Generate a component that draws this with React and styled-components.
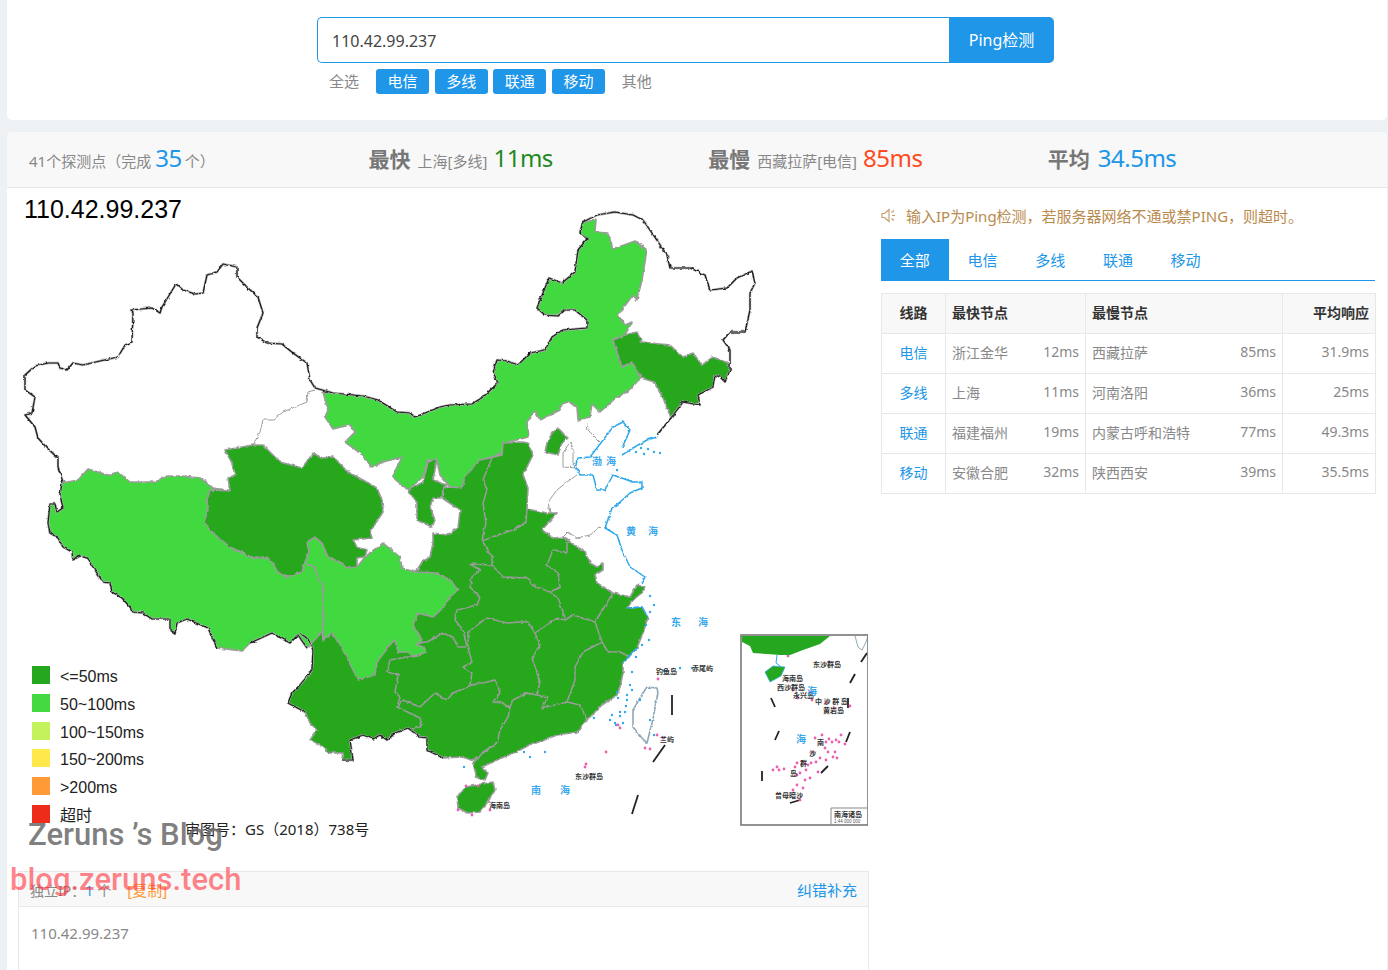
import React from "react";
import styled, { createGlobalStyle } from "styled-components";

const BLUE = "#2096e8";
const LINE = "#e8e8e8";
const FONT = `"Noto Sans", "Noto Sans CJK SC", sans-serif`;

const routes = ["电信", "多线", "联通", "移动"];

const rows = [
  { route: "电信", fast: "浙江金华", fastMs: "12ms", slow: "西藏拉萨", slowMs: "85ms", avg: "31.9ms" },
  { route: "多线", fast: "上海", fastMs: "11ms", slow: "河南洛阳", slowMs: "36ms", avg: "25ms" },
  { route: "联通", fast: "福建福州", fastMs: "19ms", slow: "内蒙古呼和浩特", slowMs: "77ms", avg: "49.3ms" },
  { route: "移动", fast: "安徽合肥", fastMs: "32ms", slow: "陕西西安", slowMs: "39ms", avg: "35.5ms" },
];

const legend = [
  { color: "#25a71f", label: "<=50ms" },
  { color: "#43d940", label: "50~100ms" },
  { color: "#c3f25c", label: "100~150ms" },
  { color: "#ffe94a", label: "150~200ms" },
  { color: "#ff9a36", label: ">200ms" },
  { color: "#ee2c1a", label: "超时" },
];

// map shapes, coordinates are page pixels (viewBox starts at the map corner)
const innerMongolia =
  "323,392 333,393 363,396 378,400 397,412 410,413 415,417 440,407 450,405 472,404 483,397 498,383 493,372 497,360 507,361 518,365 530,353 545,350 552,337 563,330 587,328 587,320 575,310 565,310 558,316 545,315 537,308 549,278 562,283 575,272 578,250 587,239 580,232 583,222 596,220 595,232 608,233 613,249 635,241 647,250 642,280 637,300 633,295 618,315 625,325 632,322 625,335 613,340 622,367 632,362 641,378 627,392 617,397 600,412 592,404 590,417 578,420 577,407 568,402 562,404 560,410 540,420 535,411 527,422 529,437 503,443 503,453 492,457 480,460 465,480 462,488 450,487 440,475 437,460 428,460 423,477 408,490 392,477 402,457 383,462 372,467 360,453 345,442 355,432 350,425 333,429 325,417 328,410";
const tibetSichuan =
  "62,483 78,480 88,469 108,475 118,472 130,482 155,482 167,476 183,476 200,478 213,488 228,490 300,530 315,537 340,562 357,567 365,557 383,543 400,557 402,568 415,572 437,573 450,580 458,590 450,597 443,608 433,617 418,613 413,625 422,640 417,645 423,647 426,653 413,656 408,652 398,652 395,640 390,645 377,662 375,675 358,680 342,648 332,633 323,640 322,632 307,648 298,635 290,643 272,633 250,643 242,651 217,648 208,628 187,619 177,623 175,633 170,630 170,619 152,619 143,613 133,612 130,607 122,598 112,592 110,583 103,582 87,558 80,556 73,560 72,552 63,547 58,538 50,533 48,523 50,504 55,504 57,512 63,508 60,495";
const qinghai =
  "225,450 253,445 263,445 280,462 302,468 313,453 322,458 333,457 348,472 363,480 377,488 382,500 383,512 370,532 372,538 353,540 357,547 367,550 365,557 357,558 357,567 347,568 340,562 328,557 322,543 315,537 307,542 309,552 305,562 302,572 293,575 287,577 278,573 273,563 267,558 253,558 230,547 213,533 204,522 208,510 207,500 210,490 230,491 228,478 235,475 232,463";
const jilin =
  "613,340 625,335 637,332 642,342 660,344 670,345 683,357 693,353 702,365 713,357 728,363 730,370 725,382 720,377 715,375 713,387 698,395 700,405 683,402 671,418 663,398 654,382 641,378 632,362 622,367";
const ningxia =
  "408,490 423,482 428,462 437,459 433,480 447,485 443,488 442,498 433,498 430,507 435,520 432,527 417,520 417,503";
const beijing = "558,428 568,438 562,443 558,455 545,452 547,443 552,433";
const south =
  "417,570 422,562 430,557 433,543 433,533 447,535 458,528 460,510 442,498 443,488 450,487 462,488 465,477 480,460 490,458 502,455 503,443 522,442 528,443 533,455 523,475 528,488 527,509 547,513 557,513 542,530 553,538 563,537 570,542 585,552 590,563 597,567 603,563 603,570 595,575 597,583 613,593 630,597 637,585 645,587 643,592 633,600 627,608 642,607 648,618 643,633 637,648 623,663 623,673 620,687 617,695 602,705 585,722 577,732 557,735 537,743 533,743 520,750 497,760 482,767 488,773 485,780 477,778 473,763 477,757 472,760 462,757 443,758 427,750 427,738 420,737 408,728 395,733 387,740 380,735 373,739 363,735 350,740 353,760 343,760 342,753 330,753 323,747 310,740 317,730 310,723 305,712 288,703 292,693 300,685 312,670 313,650 308,639 300,633 322,625";
const hainan = "457,797 465,787 493,782 495,790 487,803 480,812 468,813 458,808";
const taiwan = "647,687 657,688 658,693 652,723 647,743 642,738 633,727 633,710 643,693";

const provinceLines = [
  "492,458 483,480 487,490 483,503 486,523 482,540",
  "527,509 526,522 513,530 498,535 482,541",
  "483,542 492,557 492,565 503,577 528,578 532,585 550,592 558,598 565,618",
  "567,542 567,552 553,550 547,565 558,573 560,587 550,592",
  "492,565 470,564 480,570 472,577 470,587 480,597 477,605 457,610 455,620 463,630 467,647",
  "468,632 487,618 507,623 520,622 528,622 535,633 557,618 565,620 573,615 595,622 613,593",
  "535,633 540,645 532,658 540,682 537,695",
  "468,632 468,648 472,662 463,667 472,673 470,685 483,683 495,680 500,693 493,702 502,703 510,707 513,700 527,693 537,695 548,697 542,708 563,703 567,702 580,705 587,720",
  "595,622 602,642 583,652 575,667 575,680 567,702",
  "602,642 608,652 620,652 630,657",
  "510,707 508,717 500,730 497,743 483,752 477,760",
  "397,707 403,700 420,707 435,693 447,700 453,693 472,685",
  "413,656 390,660 387,672 398,675 395,692 400,697 397,707 420,718 422,725 412,730",
  "417,643 427,642 443,633 453,637 458,647 467,647",
  "305,564 315,567 318,578 323,587 323,603 323,640",
];

const thinLines = [
  "315,390 308,392 307,402 295,407 283,412 273,420 263,420 260,432 253,445",
  "587,423 588,430 600,442",
  "570,442 573,448 573,463 577,468 563,467 563,453 570,442",
  "577,475 567,482 557,490 548,502 550,513",
  "563,537 568,532 577,538 590,535 600,527",
];

const borderBlack = [
  "63,482 58,467 58,458 47,448 38,438 35,427 25,415 32,413 35,397 25,390 25,375 35,366 48,363 58,363 60,368 67,370 73,363 83,365 100,361 118,357 125,345 132,342 133,313 131,310 152,308 160,313 162,307 176,284 183,290 195,294 203,293 207,275 217,272 223,264 237,267 237,277 248,288 258,297 263,313 257,328 257,337 267,343 282,344 293,353 307,363 310,380 315,388 333,393 363,396 378,400 397,412 410,413 415,417 440,407 450,405 472,404 483,397 498,383 493,372 497,360 507,361 518,365 530,353 545,350 552,337 563,330 587,328 587,320 575,310 565,310 558,316 545,315 537,308 549,278 562,283 575,272 578,250 587,239 580,232 583,222 597,215 615,212 633,215 643,220 652,233 667,255 670,268 690,268 705,275 710,290 727,288 737,278 752,271 755,283 750,293 750,310 745,332 730,332 723,340 730,350 730,370 725,382 720,377 715,375 713,387 698,395 700,405 683,402 671,418 657,435",
  "62,483 60,495 63,508 57,512 55,504 50,504 48,523 50,533 58,538 63,547 72,552 73,560 80,556 87,558 103,582 110,583 112,592 122,598 130,607 133,612 143,613 152,619 170,619 170,630 175,633 177,623 187,619 208,628 217,648",
  "250,643 272,633 290,643 298,635 307,648",
  "300,633 308,639 313,650 312,670 300,685 292,693 288,703 305,712",
  "350,740 353,760 343,760",
  "350,740 363,735 373,739 380,735 387,740 395,733 408,728 420,737 427,738 427,750 443,758",
];

const coastBlue = [
  "657,437 647,440 633,448 622,455",
  "622,448 630,430 623,422 613,427 597,448 590,457 578,458 575,467 580,475 593,475 597,490 605,490 613,475 633,482 642,482 642,488 630,493 620,502 612,508 605,528 617,535 622,550 630,567 645,577 642,583",
  "627,608 642,607 648,618",
  "637,648 623,663",
];

const blueDots = [
  [636,452],[641,448],[648,449],[644,454],[654,452],[660,453],[617,470],[650,596],[654,605],[650,612],[646,625],[649,640],[642,645],[636,657],[632,672],[630,685],[627,695],[618,698],[594,718],[626,706],[623,723],[616,725],[640,700],[617,692],[650,720],[664,671],[680,668],[692,668],[654,735],[664,738],[464,767],[610,720],[625,712],[620,716],[545,752],[632,690],[627,700],[615,723],[612,715],[620,712],[530,757],[524,752],
];
const pinkDots = [
  [658,679],[620,728],[618,725],[606,752],[586,764],[585,767],[650,749],[657,735],[663,738],[645,748],[466,786],[478,786],[458,810],[472,815],[490,810],
  [788,656],[829,662],[793,690],[798,698],[810,692],[834,708],[826,703],[812,700],[850,706],[822,735],[826,742],[829,739],[812,752],[815,738],[825,748],[828,752],[832,742],[841,735],[833,757],[826,760],[835,752],[837,758],[836,740],[845,744],[839,742],[820,758],[811,763],[808,765],[803,762],[797,763],[795,767],[784,769],[779,770],[777,767],[773,770],[797,775],[816,762],[806,770],[800,773],[818,772],[810,778],[805,780],[803,788],[797,785],[793,790],[800,800],
];

const mapLabels = [
  { x: 592, y: 465, text: "渤", blue: true },
  { x: 606, y: 465, text: "海", blue: true },
  { x: 626, y: 535, text: "黄", blue: true },
  { x: 648, y: 535, text: "海", blue: true },
  { x: 671, y: 626, text: "东", blue: true },
  { x: 698, y: 626, text: "海", blue: true },
  { x: 531, y: 794, text: "南", blue: true },
  { x: 560, y: 794, text: "海", blue: true },
  { x: 656, y: 674, text: "钓鱼岛" },
  { x: 692, y: 671, text: "赤尾屿" },
  { x: 660, y: 742, text: "兰屿" },
  { x: 575, y: 779, text: "东沙群岛" },
  { x: 489, y: 808, text: "海南岛" },
  { x: 813, y: 667, text: "东沙群岛" },
  { x: 782, y: 681, text: "海南岛" },
  { x: 777, y: 690, text: "西沙群岛" },
  { x: 793, y: 698, text: "永兴岛" },
  { x: 815, y: 704, text: "中 沙 群 岛" },
  { x: 823, y: 713, text: "黄岩岛" },
  { x: 775, y: 798, text: "曾母暗沙" },
  { x: 807, y: 695, text: "海", blue: true },
  { x: 796, y: 743, text: "海", blue: true },
  { x: 817, y: 745, text: "南" },
  { x: 809, y: 756, text: "沙" },
  { x: 800, y: 766, text: "群" },
  { x: 790, y: 776, text: "岛" },
];

const dashes = [
  "672,695 672,715", "665,745 653,762", "638,795 632,814",
  "861,662 867,653", "850,683 855,674", "848,698 848,708", "846,742 850,732",
  "821,773 828,766", "790,803 800,800", "762,771 762,781", "775,740 779,731", "771,698 775,707",
];

const GlobalStyle = createGlobalStyle`
  html, body {
    margin: 0;
    height: 970px;
    overflow: hidden;
    background: #edf1f4;
    font-family: ${FONT};
    font-size: 14px;
    color: #888;
  }
  * { box-sizing: border-box; }
`;

const Page = styled.div`
  position: relative;
  width: 1380px;
  margin-left: 7px;
`;

const SearchCard = styled.section`
  height: 120px;
  background: #fff;
  border-radius: 0 0 5px 5px;
  padding: 17px 0 0 310px;
`;

const SearchBar = styled.div`
  display: flex;
  width: 737px;
  height: 46px;
`;

const IpInput = styled.div`
  flex: 1;
  border: 1px solid ${BLUE};
  border-right: 0;
  border-radius: 5px 0 0 5px;
  padding-left: 14px;
  font-size: 16px;
  line-height: 46px;
  color: #444;
`;

const PingButton = styled.div`
  width: 105px;
  background: ${BLUE};
  border-radius: 0 5px 5px 0;
  color: #fff;
  font-size: 16px;
  line-height: 47px;
  text-align: center;
`;

const Filters = styled.div`
  display: flex;
  align-items: center;
  height: 25px;
  margin-top: 6px;
  padding-left: 12px;
  font-size: 15px;
`;

const PlainFilter = styled.span`
  width: ${(p) => p.$width}px;
  margin-left: ${(p) => p.$left || 0}px;
  color: #888;
  line-height: 25px;
`;

const Chip = styled.span`
  width: 53px;
  height: 25px;
  margin-right: 5.7px;
  background: ${BLUE};
  border-radius: 3px;
  color: #fff;
  line-height: 25px;
  text-align: center;
`;

const ResultCard = styled.section`
  margin-top: 12px;
  height: 838px;
  background: #fff;
  border-radius: 5px 5px 0 0;
`;

const StatBar = styled.header`
  display: grid;
  grid-template-columns: repeat(4, 339.6px);
  align-items: baseline;
  height: 56px;
  padding: 9px 0 0 22px;
  background: #f8f8f8;
  border-bottom: 1px solid ${LINE};
  border-radius: 5px 5px 0 0;
  font-size: 15px;
`;

const Stat = styled.div`
  white-space: nowrap;
  color: #888;
`;

const StatTitle = styled.b`
  margin-right: 7px;
  font-size: 21px;
  color: #777;
`;

const StatValue = styled.span`
  margin-left: ${(p) => p.$gap ?? 6}px;
  margin-right: ${(p) => p.$after ?? 0}px;
  font-size: 24px;
  letter-spacing: -0.5px;
  color: ${(p) => p.$color};
`;

const Columns = styled.div`
  display: flex;
`;

const LeftColumn = styled.div`
  position: relative;
  width: 874px;
`;

const MapTitle = styled.h2`
  position: absolute;
  left: 17px;
  top: 6px;
  margin: 0;
  font: 400 25px/30px "Liberation Sans", sans-serif;
  color: #000;
`;

const MapSvg = styled.svg`
  display: block;
  width: 861px;
  height: 683px;
`;

const Region = styled.polygon`
  fill: ${(p) => p.$fill};
  stroke: ${(p) => p.$stroke || "#9c9c9c"};
  stroke-width: 1.6;
  stroke-linejoin: round;
`;

const MapLine = styled.polyline`
  fill: none;
  stroke: ${(p) => p.$color || "#9c9c9c"};
  stroke-width: ${(p) => p.$width || 1.5};
  stroke-linejoin: round;
`;

const MapLabel = styled.text`
  font-family: "Noto Sans CJK SC", sans-serif;
  font-size: ${(p) => (p.$blue ? 10 : 7)}px;
  font-weight: 700;
  fill: ${(p) => (p.$blue ? "#3aa8ec" : "#333")};
`;

const Legend = styled.ul`
  position: absolute;
  left: 25px;
  top: 478px;
  margin: 0;
  padding: 0;
  list-style: none;
  font: 16px/18px "Liberation Sans", "Noto Sans CJK SC", sans-serif;
  color: #222;
`;

const LegendItem = styled.li`
  display: flex;
  gap: 10px;
  height: 18px;
  margin-bottom: 9.8px;
`;

const LegendLabel = styled.span`
  padding-top: 2px;
  white-space: nowrap;
`;

const Swatch = styled.i`
  width: 18px;
  height: 18px;
  background: ${(p) => p.$color};
`;

const MapCredit = styled.div`
  position: absolute;
  left: 178px;
  top: 631px;
  font-size: 15px;
  line-height: 20px;
  color: #222;
`;

const IpCard = styled.div`
  width: 851px;
  height: 99px;
  margin-left: 11px;
  border: 1px solid ${LINE};
  border-bottom: 0;
`;

const IpCardHead = styled.div`
  display: flex;
  justify-content: space-between;
  align-items: center;
  height: 35px;
  padding: 0 11px;
  background: #f8f8f8;
  border-bottom: 1px solid ${LINE};
  font-size: 15px;
`;

const CountText = styled.span`
  font-size: 14px;
  color: #888;
`;

const CountNumber = styled.span`
  margin-right: 4px;
  color: ${BLUE};
`;

const CopyLink = styled.span`
  margin-left: 16px;
  font-size: 15px;
  color: #ff9a36;
`;

const BlueLink = styled.span`
  color: ${BLUE};
`;

const IpCardBody = styled.div`
  padding: 15px 12px;
  font-size: 15px;
  line-height: 22px;
  color: #888;
`;

const RightColumn = styled.aside`
  width: 494px;
`;

const Notice = styled.div`
  display: flex;
  align-items: center;
  gap: 10px;
  height: 20px;
  margin-top: 17px;
  font-size: 15px;
  white-space: nowrap;
  color: #b98a4e;
`;

const Tabs = styled.nav`
  display: flex;
  height: 42px;
  margin-top: 14px;
  border-bottom: 1px solid ${BLUE};
`;

const Tab = styled.span`
  width: 67.7px;
  font-size: 15px;
  line-height: 42px;
  text-align: center;
  color: ${(p) => (p.$active ? "#fff" : BLUE)};
  background: ${(p) => (p.$active ? BLUE : "transparent")};
`;

const Table = styled.table`
  width: 494px;
  margin-top: 12px;
  border-collapse: collapse;
  table-layout: fixed;
`;

const Th = styled.th`
  height: 40px;
  padding: 0 6px 4px;
  border: 1px solid ${LINE};
  background: #f8f8f8;
  font-size: 14px;
  font-weight: 700;
  color: #333;
  text-align: ${(p) => p.$align || "left"};
`;

const Td = styled.td`
  height: 40px;
  padding: 0 6px 4px;
  border: 1px solid ${LINE};
  color: ${(p) => p.$color || "#888"};
  text-align: ${(p) => p.$align || "left"};
`;

const NodeCell = styled.div`
  display: flex;
  justify-content: space-between;
`;

const Watermark = styled.div`
  position: absolute;
  white-space: nowrap;
  font-family: Roboto, sans-serif;
  font-weight: 500;
  left: ${(p) => p.$left}px;
  top: ${(p) => p.$top}px;
  font-size: ${(p) => p.$size}px;
  line-height: 44px;
  color: ${(p) => p.$color};
  pointer-events: none;
`;

function SpeakerIcon() {
  return (
    <svg width="15" height="15" viewBox="0 0 15 15" fill="none" stroke="#c49a68" strokeWidth="1.1">
      <path d="M1 5.5h2.5L8 1.5v12l-4.5-4H1z" />
      <path d="M10.5 4.5 13 2.5M11 7.5h3M10.5 10.5l2.5 2" />
    </svg>
  );
}

function ChinaMap() {
  return (
    <MapSvg viewBox="7 188 861 683">
      <defs>
        <filter id="rough" filterUnits="userSpaceOnUse" x="7" y="188" width="861" height="683">
          <feTurbulence type="fractalNoise" baseFrequency="0.22" numOctaves="2" seed="4" result="n" />
          <feDisplacementMap in="SourceGraphic" in2="n" scale="3" xChannelSelector="R" yChannelSelector="G" />
          <feGaussianBlur stdDeviation="0.3" />
        </filter>
      </defs>
      <g filter="url(#rough)">
        <Region points={innerMongolia} $fill="#43d940" />
        <Region points={south} $fill="#25a71f" />
        <Region points={tibetSichuan} $fill="#43d940" />
        <Region points={qinghai} $fill="#25a71f" />
        <Region points={jilin} $fill="#25a71f" />
        <Region points={ningxia} $fill="#25a71f" />
        <Region points={beijing} $fill="#25a71f" />
        <Region points={hainan} $fill="#25a71f" />
        <Region points={taiwan} $fill="#fff" $stroke="#8fa9b8" />
        {provinceLines.map((p) => (
          <MapLine key={p} points={p} />
        ))}
        {thinLines.map((p) => (
          <MapLine key={p} points={p} $width={1} />
        ))}
        {coastBlue.map((p) => (
          <MapLine key={p} points={p} $color="#2fa8ea" />
        ))}
        {borderBlack.map((p) => (
          <React.Fragment key={p}>
            <MapLine points={p} $color="#b4b4b4" $width={2.4} />
            <MapLine points={p} $color="#1c1c1c" $width={1.2} />
          </React.Fragment>
        ))}
      </g>
      {dashes.map((p) => (
        <MapLine key={p} points={p} $color="#222" $width={1.8} />
      ))}
      {blueDots.map(([x, y]) => (
        <circle key={`b${x}-${y}`} cx={x} cy={y} r="1.2" fill="#2fa8ea" />
      ))}
      {pinkDots.map(([x, y]) => (
        <circle key={`p${x}-${y}`} cx={x} cy={y} r="1.4" fill="#ea5fae" />
      ))}

      {/* south china sea inset */}
      <path d="M742 636 742 642 750 646 753 653 767 654 780 655 790 655 803 650 820 644 830 636Z" fill="#25a71f" />
      <path d="M765 672 773 666 785 667 781 676 770 682Z" fill="#25a71f" stroke="#2fa8ea" strokeWidth="0.7" />
      <path d="M777 655 776 663 780 666" fill="none" stroke="#2fa8ea" />
      <path d="M855 636 858 647 862 650 866 642 868 636" fill="none" stroke="#8fa9b8" />
      <rect x="741" y="635" width="127" height="190" fill="none" stroke="#777" strokeWidth="1.6" />
      <path d="M831 825V808H868" fill="none" stroke="#888" />
      {mapLabels.map((l) => (
        <MapLabel key={`${l.x}-${l.text}`} x={l.x} y={l.y} $blue={l.blue}>
          {l.text}
        </MapLabel>
      ))}
      <MapLabel x={834} y={817}>南海诸岛</MapLabel>
      <text x={834} y={823} fontSize="4.5" fill="#555" fontFamily="Liberation Sans">1:44 000 000</text>
    </MapSvg>
  );
}

export default function App() {
  return (
    <Page>
      <GlobalStyle />
      <SearchCard>
        <SearchBar>
          <IpInput>110.42.99.237</IpInput>
          <PingButton>Ping检测</PingButton>
        </SearchBar>
        <Filters>
          <PlainFilter $width={47}>全选</PlainFilter>
          {routes.map((r) => (
            <Chip key={r}>{r}</Chip>
          ))}
          <PlainFilter $width={30} $left={11}>其他</PlainFilter>
        </Filters>
      </SearchCard>

      <ResultCard>
        <StatBar>
          <Stat>
            {"41个探测点\uFF08完成"}
            <StatValue $gap={4} $after={3} $color={BLUE}>35</StatValue>
            {"个\uFF09"}
          </Stat>
          <Stat>
            <StatTitle>最快</StatTitle>上海[多线]
            <StatValue $color="#1e8a1e">11ms</StatValue>
          </Stat>
          <Stat>
            <StatTitle>最慢</StatTitle>西藏拉萨[电信]
            <StatValue $color="#ff4a20">85ms</StatValue>
          </Stat>
          <Stat>
            <StatTitle>平均</StatTitle>
            <StatValue $gap={1} $color={BLUE}>34.5ms</StatValue>
          </Stat>
        </StatBar>

        <Columns>
          <LeftColumn>
            <MapTitle>110.42.99.237</MapTitle>
            <ChinaMap />
            <Legend>
              {legend.map((l) => (
                <LegendItem key={l.label}>
                  <Swatch $color={l.color} />
                  <LegendLabel>{l.label}</LegendLabel>
                </LegendItem>
              ))}
            </Legend>
            <MapCredit>{"审图号\uFF1AGS\uFF082018\uFF09738号"}</MapCredit>
            <IpCard>
              <IpCardHead>
                <CountText>
                  {"独立IP\uFF1A"}<CountNumber>1</CountNumber>个
                  <CopyLink>[复制]</CopyLink>
                </CountText>
                <BlueLink>纠错补充</BlueLink>
              </IpCardHead>
              <IpCardBody>110.42.99.237</IpCardBody>
            </IpCard>
          </LeftColumn>

          <RightColumn>
            <Notice>
              <SpeakerIcon />
              {"输入IP为Ping检测\uFF0C若服务器网络不通或禁PING\uFF0C则超时。"}
            </Notice>
            <Tabs>
              <Tab $active>全部</Tab>
              {routes.map((r) => (
                <Tab key={r}>{r}</Tab>
              ))}
            </Tabs>
            <Table>
              <colgroup>
                <col width="64" />
                <col width="140" />
                <col width="197" />
                <col width="93" />
              </colgroup>
              <thead>
                <tr>
                  <Th $align="center">线路</Th>
                  <Th>最快节点</Th>
                  <Th>最慢节点</Th>
                  <Th $align="right">平均响应</Th>
                </tr>
              </thead>
              <tbody>
                {rows.map((row) => (
                  <tr key={row.route}>
                    <Td $align="center" $color={BLUE}>{row.route}</Td>
                    <Td>
                      <NodeCell>
                        <span>{row.fast}</span>
                        <span>{row.fastMs}</span>
                      </NodeCell>
                    </Td>
                    <Td>
                      <NodeCell>
                        <span>{row.slow}</span>
                        <span>{row.slowMs}</span>
                      </NodeCell>
                    </Td>
                    <Td $align="right">{row.avg}</Td>
                  </tr>
                ))}
              </tbody>
            </Table>
          </RightColumn>
        </Columns>
      </ResultCard>

      <Watermark $left={21} $top={813} $size={31} $color="rgba(105,105,105,0.85)">Zeruns ’s Blog</Watermark>
      <Watermark $left={3} $top={858} $size={31} $color="rgba(255,50,60,0.6)">blog.zeruns.tech</Watermark>
    </Page>
  );
}
